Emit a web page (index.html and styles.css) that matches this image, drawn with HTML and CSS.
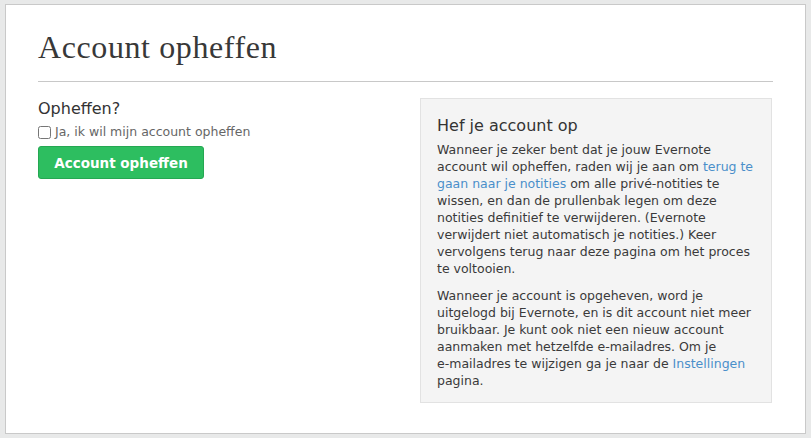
FILE: index.html
```html
<!DOCTYPE html>
<html lang="nl">
<head>
<meta charset="utf-8">
<title>Account opheffen</title>
<link rel="stylesheet" href="styles.css">
</head>
<body>
<div class="card">
  <h1 class="title">Account opheffen</h1>
  <div class="cols">
    <div class="main">
      <h2 class="q">Opheffen?</h2>
      <label class="check"><input type="checkbox" class="box"> Ja, ik wil mijn account opheffen</label>
      <button class="btn">Account opheffen</button>
    </div>
    <aside class="side">
      <h3 class="side-title">Hef je account op</h3>
      <p class="para">Wanneer je zeker bent dat je jouw Evernote account wil opheffen, raden wij je aan om <a href="#" class="link">terug te gaan naar je notities</a> om alle privé-notities te wissen, en dan de prullenbak legen om deze notities definitief te verwijderen. (Evernote verwijdert niet automatisch je notities.) Keer vervolgens terug naar deze pagina om het proces te voltooien.</p>
      <p class="para">Wanneer je account is opgeheven, word je uitgelogd bij Evernote, en is dit account niet meer bruikbaar. Je kunt ook niet een nieuw account aanmaken met hetzelfde e&#8209;mailadres. Om je<br>e&#8209;mailadres te wijzigen ga je naar de <a href="#" class="link">Instellingen</a> pagina.</p>
    </aside>
  </div>
</div>
</body>
</html>
```
FILE: styles.css
```css
html, body {
  margin: 0;
  padding: 0;
}
body {
  background: #e8e9e9;
  font-family: "DejaVu Sans", "Noto Sans", sans-serif;
  color: #404040;
  padding: 4px 0 0 5px;
}
.card {
  box-sizing: border-box;
  width: 801px;
  height: 430px;
  background: #fff;
  border: 1px solid #c9c9c9;
  padding: 23px 32px 0 32px;
}
.title {
  margin: 0;
  font-family: "Liberation Serif", serif;
  font-weight: normal;
  font-size: 32px;
  line-height: 38px;
  letter-spacing: 0.6px;
  color: #383838;
  padding-bottom: 15px;
  border-bottom: 1px solid #c8c8c8;
}
.cols {
  display: flex;
  margin-top: 16px;
}
.main {
  flex: 1;
  padding-top: 1px;
}
.q {
  margin: 0;
  font-size: 16px;
  font-weight: normal;
  line-height: 20px;
  color: #333;
}
.check {
  display: flex;
  align-items: center;
  gap: 4px;
  margin-top: 5px;
  font-size: 12.5px;
  line-height: 16px;
  color: #666;
}
.box {
  margin: 0;
  width: 13px;
  height: 13px;
}
.btn {
  display: block;
  margin-top: 6px;
  width: 166px;
  height: 33px;
  border: 1px solid #25a752;
  border-radius: 3px;
  background: #2dbe60;
  color: #fff;
  font-family: "DejaVu Sans", sans-serif;
  font-weight: bold;
  font-size: 13.5px;
  padding: 0;
}
.side {
  box-sizing: border-box;
  width: 352px;
  margin-right: 1px;
  background: #f4f4f4;
  border: 1px solid #e2e2e2;
  padding: 16px 16px 13px 16px;
  color: #3a3a3a;
}
.side-title {
  margin: 0 0 4px;
  font-size: 16px;
  font-weight: normal;
  line-height: 22px;
  color: #333;
}
.para {
  margin: 0 0 10px;
  font-size: 12.5px;
  line-height: 17px;
}
.para:last-child {
  margin-bottom: 0;
}
.link {
  color: #4a8fca;
  text-decoration: none;
}
```
